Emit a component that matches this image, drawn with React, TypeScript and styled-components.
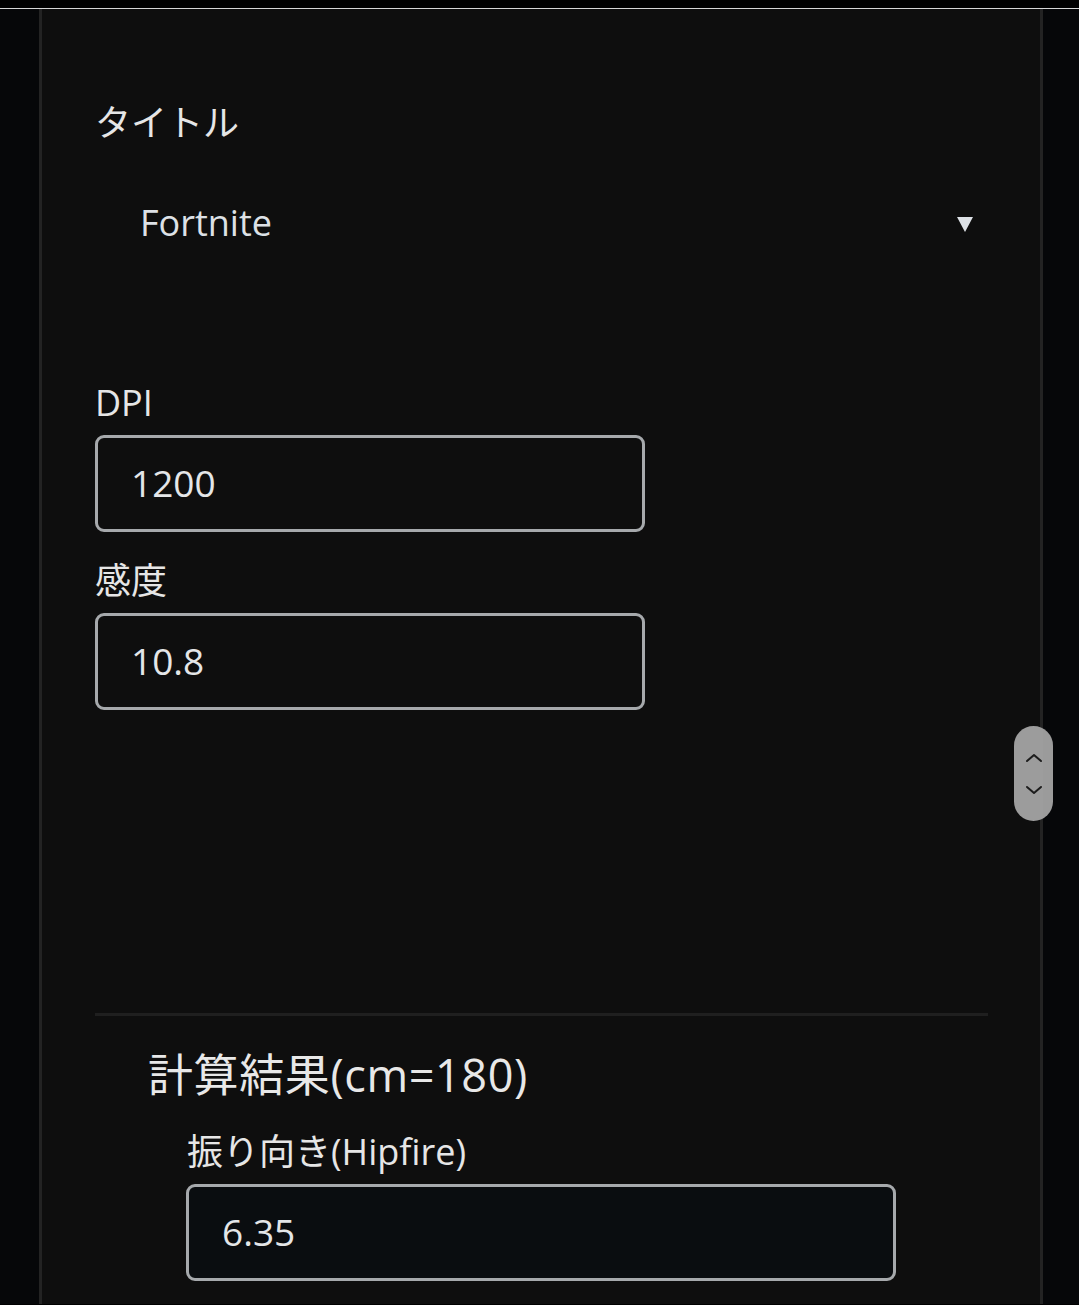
import { ReactElement } from 'react';
import styled, { createGlobalStyle } from 'styled-components';

const GlobalStyle = createGlobalStyle`
  html, body {
    margin: 0;
    padding: 0;
    background: #000;
  }
  body {
    font-family: 'Open Sans', 'Noto Sans CJK JP', sans-serif;
    color: #e6e6e6;
    overflow: hidden;
  }
`;

const Shell = styled.div`
  margin-top: 8px;
  border-top: 1px solid #d6d6d6;
  background: #060709;
  padding: 0 36px 0 39px;
  min-height: 1296px;
  box-sizing: border-box;
  display: flex;
`;

const Panel = styled.main`
  flex: 1;
  background: #0e0e0e;
  border-left: 3px solid #232323;
  border-right: 3px solid #232323;
  padding: 87px 52px 0 53px;
  display: flex;
  flex-direction: column;
`;

const Label = styled.label<{ indent?: number }>`
  display: block;
  font-size: 36px;
  line-height: 54px;
  color: #e6e6e6;
  padding-left: ${({ indent }) => indent ?? 0}px;
`;

const Select = styled.div`
  display: flex;
  align-items: center;
  justify-content: space-between;
  height: 96px;
  margin-top: 24px;
  padding: 0 15px 0 45px;
  font-size: 36px;
  color: #dde1e6;
`;

const Caret = styled.span`
  width: 0;
  height: 0;
  margin-top: 4px;
  border-left: 8px solid transparent;
  border-right: 8px solid transparent;
  border-top: 15px solid #dde1e6;
`;

const Field = styled.div<{ gap?: number }>`
  display: flex;
  flex-direction: column;
  gap: 5px;
  margin-top: ${({ gap }) => gap ?? 0}px;
`;

const Input = styled.div<{ width: number; dark?: boolean; indent?: number }>`
  box-sizing: border-box;
  width: ${({ width }) => width}px;
  height: 97px;
  margin-left: ${({ indent }) => indent ?? 0}px;
  border: 3px solid #a6a9ac;
  border-radius: 9px;
  background: ${({ dark }) => (dark ? '#0a0d10' : '#0e0e0e')};
  display: flex;
  align-items: center;
  padding: 0 0 3px 33px;
  font-size: 37px;
  color: #e4e6e8;
`;

const Divider = styled.hr`
  border: none;
  height: 3px;
  background: #1f1f1f;
  margin: 303px 0 0;
`;

const ResultTitle = styled.h2`
  margin: 26px 0 0;
  padding-left: 53px;
  font-size: 45px;
  font-weight: 400;
  letter-spacing: 0.6px;
  line-height: 66px;
  color: #e8e8e8;
`;

const ScrollPill = styled.div`
  position: fixed;
  left: 1014px;
  top: 726px;
  width: 39px;
  height: 95px;
  border-radius: 20px;
  background: rgba(168, 168, 168, 0.92);
  display: flex;
  flex-direction: column;
  align-items: center;
  justify-content: center;
  gap: 22px;
`;

const Chevron = ({ up }: { up?: boolean }): ReactElement => (
  <svg width="18" height="10" viewBox="0 0 18 10">
    <path
      d={up ? 'M2 8 L9 2 L16 8' : 'M2 2 L9 8 L16 2'}
      fill="none"
      stroke="#1c1c1c"
      strokeWidth="2"
      strokeLinecap="round"
      strokeLinejoin="round"
    />
  </svg>
);

const App = (): ReactElement => {
  return (
    <>
      <GlobalStyle />
      <Shell>
        <Panel>
          <Label>タイトル</Label>
          <Select>
            <span>Fortnite</span>
            <Caret />
          </Select>

          <Field gap={106}>
            <Label>DPI</Label>
            <Input width={550}>1200</Input>
          </Field>
          <Field gap={22}>
            <Label>感度</Label>
            <Input width={550}>10.8</Input>
          </Field>

          <Divider />
          <ResultTitle>計算結果(cm=180)</ResultTitle>
          <Field gap={17}>
            <Label indent={92}>振り向き(Hipfire)</Label>
            <Input width={710} indent={91} dark>
              6.35
            </Input>
          </Field>
        </Panel>
      </Shell>
      <ScrollPill>
        <Chevron up />
        <Chevron />
      </ScrollPill>
    </>
  );
};

export default App;
